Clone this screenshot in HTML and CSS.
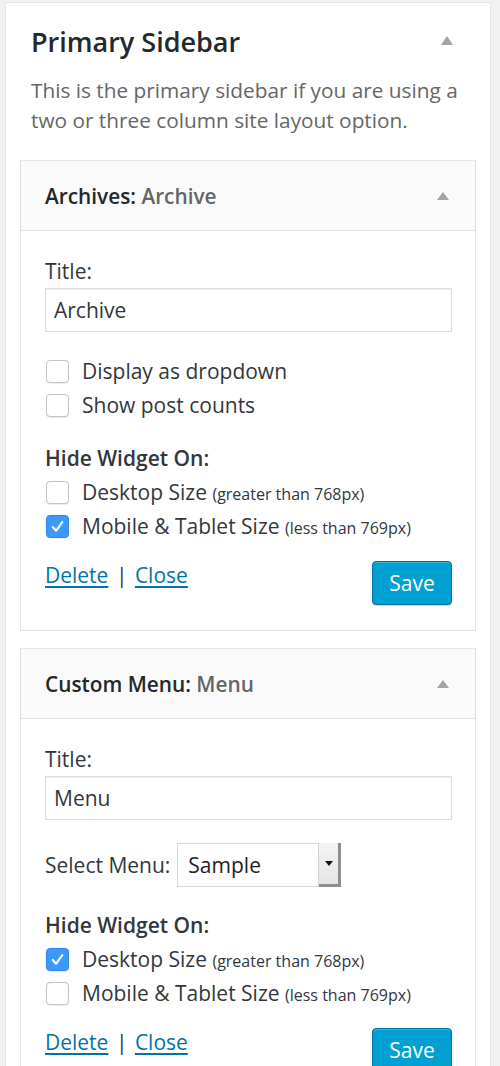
FILE: index.html
```html
<!DOCTYPE html>
<html lang="en">
<head>
<meta charset="utf-8">
<title>Widgets</title>
<link rel="stylesheet" href="styles.css">
</head>
<body>
<div class="sidebar">
  <div class="sidebar-head">
    <h2 class="sidebar-name">Primary Sidebar</h2>
    <span class="toggle toggle-lg"></span>
  </div>
  <p class="sidebar-desc">This is the primary sidebar if you are using a two or three column site layout option.</p>

  <div class="widget">
    <div class="widget-top">
      <h3 class="widget-title">Archives:<span class="in-title"> Archive</span></h3>
      <span class="toggle"></span>
    </div>
    <div class="widget-inside">
      <label class="field-label">Title:</label>
      <div class="text-input">Archive</div>

      <div class="checks checks-first">
        <div class="check-row"><span class="box"></span><span>Display as dropdown</span></div>
        <div class="check-row"><span class="box"></span><span>Show post counts</span></div>
      </div>

      <div class="hide-label hide-label-a">Hide Widget On:</div>
      <div class="checks">
        <div class="check-row"><span class="box"></span><span>Desktop Size <small>(greater than 768px)</small></span></div>
        <div class="check-row"><span class="box checked"><svg viewBox="0 0 22 22"><path d="M6 11.5l3.5 4L16 6.5"/></svg></span><span>Mobile &amp; Tablet Size <small>(less than 769px)</small></span></div>
      </div>

      <div class="widget-actions">
        <div class="links"><a href="#">Delete</a> <span class="sep">|</span> <a href="#">Close</a></div>
        <button class="save">Save</button>
      </div>
    </div>
  </div>

  <div class="widget">
    <div class="widget-top">
      <h3 class="widget-title">Custom Menu:<span class="in-title"> Menu</span></h3>
      <span class="toggle"></span>
    </div>
    <div class="widget-inside">
      <label class="field-label">Title:</label>
      <div class="text-input">Menu</div>

      <div class="select-row">
        <span>Select Menu:</span>
        <div class="select"><span class="select-value">Sample</span><span class="select-btn"><span class="caret"></span></span></div>
      </div>

      <div class="hide-label hide-label-b">Hide Widget On:</div>
      <div class="checks">
        <div class="check-row"><span class="box checked"><svg viewBox="0 0 22 22"><path d="M6 11.5l3.5 4L16 6.5"/></svg></span><span>Desktop Size <small>(greater than 768px)</small></span></div>
        <div class="check-row"><span class="box"></span><span>Mobile &amp; Tablet Size <small>(less than 769px)</small></span></div>
      </div>

      <div class="widget-actions">
        <div class="links"><a href="#">Delete</a> <span class="sep">|</span> <a href="#">Close</a></div>
        <button class="save">Save</button>
      </div>
    </div>
  </div>
</div>
</body>
</html>
```

FILE: styles.css
```css
html, body {
  margin: 0;
  padding: 0;
}

body {
  background: #f1f1f1;
  font-family: "Open Sans", "Noto Sans", sans-serif;
  color: #32373c;
  font-size: 21px;
  padding: 2px 9px 0 5px;
}

.sidebar {
  background: #fff;
  border: 1px solid #e5e5e5;
  border-bottom: none;
  padding: 0 14px 40px;
  min-height: 1100px;
}

/* sidebar heading */
.sidebar-head {
  display: flex;
  align-items: center;
  justify-content: space-between;
  padding: 19px 23px 0 11px;
}

.sidebar-name {
  margin: 0;
  font-size: 27px;
  font-weight: 600;
  line-height: 40px;
  color: #23282d;
}

.toggle {
  width: 0;
  height: 0;
  border-left: 6.5px solid transparent;
  border-right: 6.5px solid transparent;
  border-bottom: 8px solid #a0a5aa;
}

.toggle-lg {
  border-left-width: 6px;
  border-right-width: 6px;
  border-bottom-width: 9px;
  margin-top: -4px;
}

.sidebar-desc {
  margin: 13px 0 0;
  padding: 0 11px;
  font-size: 20.8px;
  line-height: 30px;
  color: #666;
}

/* widget box */
.widget {
  border: 1px solid #e5e5e5;
  background: #fff;
  margin-top: 25px;
}

.widget + .widget {
  margin-top: 17px;
}

.widget-top {
  background: #fafafa;
  border-bottom: 1px solid #e5e5e5;
  height: 69px;
  display: flex;
  align-items: center;
  justify-content: space-between;
  padding: 0 26px 0 24px;
}

.widget-title {
  margin: 0;
  font-size: 20.8px;
  font-weight: 600;
  color: #23282d;
}

.in-title {
  color: #666;
}

.widget-inside {
  padding: 25px 23px 25px 24px;
}

.field-label {
  display: block;
  line-height: 30px;
  color: #32373c;
}

.text-input {
  margin-top: 2px;
  height: 42px;
  line-height: 42px;
  border: 1px solid #ddd;
  box-shadow: inset 0 1px 2px rgba(0, 0, 0, 0.07);
  padding: 0 8px;
  color: #32373c;
}

.checks-first {
  margin-top: 22px;
}

.check-row {
  display: flex;
  align-items: center;
  height: 34px;
  gap: 13px;
  white-space: nowrap;
}

.check-row small {
  font-size: 16px;
}

.box {
  flex: none;
  box-sizing: border-box;
  width: 23px;
  height: 23px;
  margin-left: 1px;
  border: 1px solid #c4c4c4;
  border-radius: 4px;
  background: #fff;
  box-shadow: 0 0.5px 1px rgba(0, 0, 0, 0.08);
}

.box.checked {
  background: #3b99fc;
  border-color: #2e88ec;
}

.box svg {
  display: block;
  width: 21px;
  height: 21px;
}

.box svg path {
  fill: none;
  stroke: #fff;
  stroke-width: 2.2;
  stroke-linecap: round;
  stroke-linejoin: round;
}

.hide-label {
  font-weight: 600;
  line-height: 30px;
  margin-bottom: 2px;
}

.hide-label-a {
  margin-top: 21px;
}

.hide-label-b {
  margin-top: 23px;
}

/* select row */
.select-row {
  margin-top: 23px;
  display: flex;
  align-items: center;
  gap: 7px;
}

.select {
  display: flex;
  width: 164px;
  height: 44px;
  box-sizing: border-box;
  border: 1px solid #d8d8d8;
  background: #fff;
}

.select-value {
  flex: 1;
  padding-left: 10px;
  line-height: 42px;
  color: #222;
}

.select-btn {
  width: 22px;
  display: flex;
  align-items: center;
  justify-content: center;
  background: linear-gradient(#f4f4f4, #e4e4e4);
  border-left: 1px solid #d0d0d0;
  box-shadow: inset -3px -3px 0 #8e8e8e;
  margin: -1px -1px -1px 0;
}

.caret {
  width: 0;
  height: 0;
  border-left: 4.5px solid transparent;
  border-right: 4.5px solid transparent;
  border-top: 5px solid #111;
  margin: -4px 3px 0 0;
}

/* footer links and button */
.widget-actions {
  margin-top: 17px;
  display: flex;
  justify-content: space-between;
  align-items: flex-start;
}

.links {
  line-height: 30px;
}

.links a {
  color: #0073aa;
  text-decoration: underline;
  text-underline-offset: 3px;
}

.sep {
  color: #32373c;
  margin: 0 2px;
}

.save {
  margin-top: 1px;
  font-family: inherit;
  font-size: 21px;
  color: #fff;
  background: #00a0d2;
  border: 1px solid #0073aa;
  border-radius: 4px;
  box-shadow: inset 0 1px 0 rgba(120, 200, 230, 0.5), 0 1px 0 rgba(0, 0, 0, 0.15);
  width: 80px;
  height: 44px;
  padding: 0;
}
```
